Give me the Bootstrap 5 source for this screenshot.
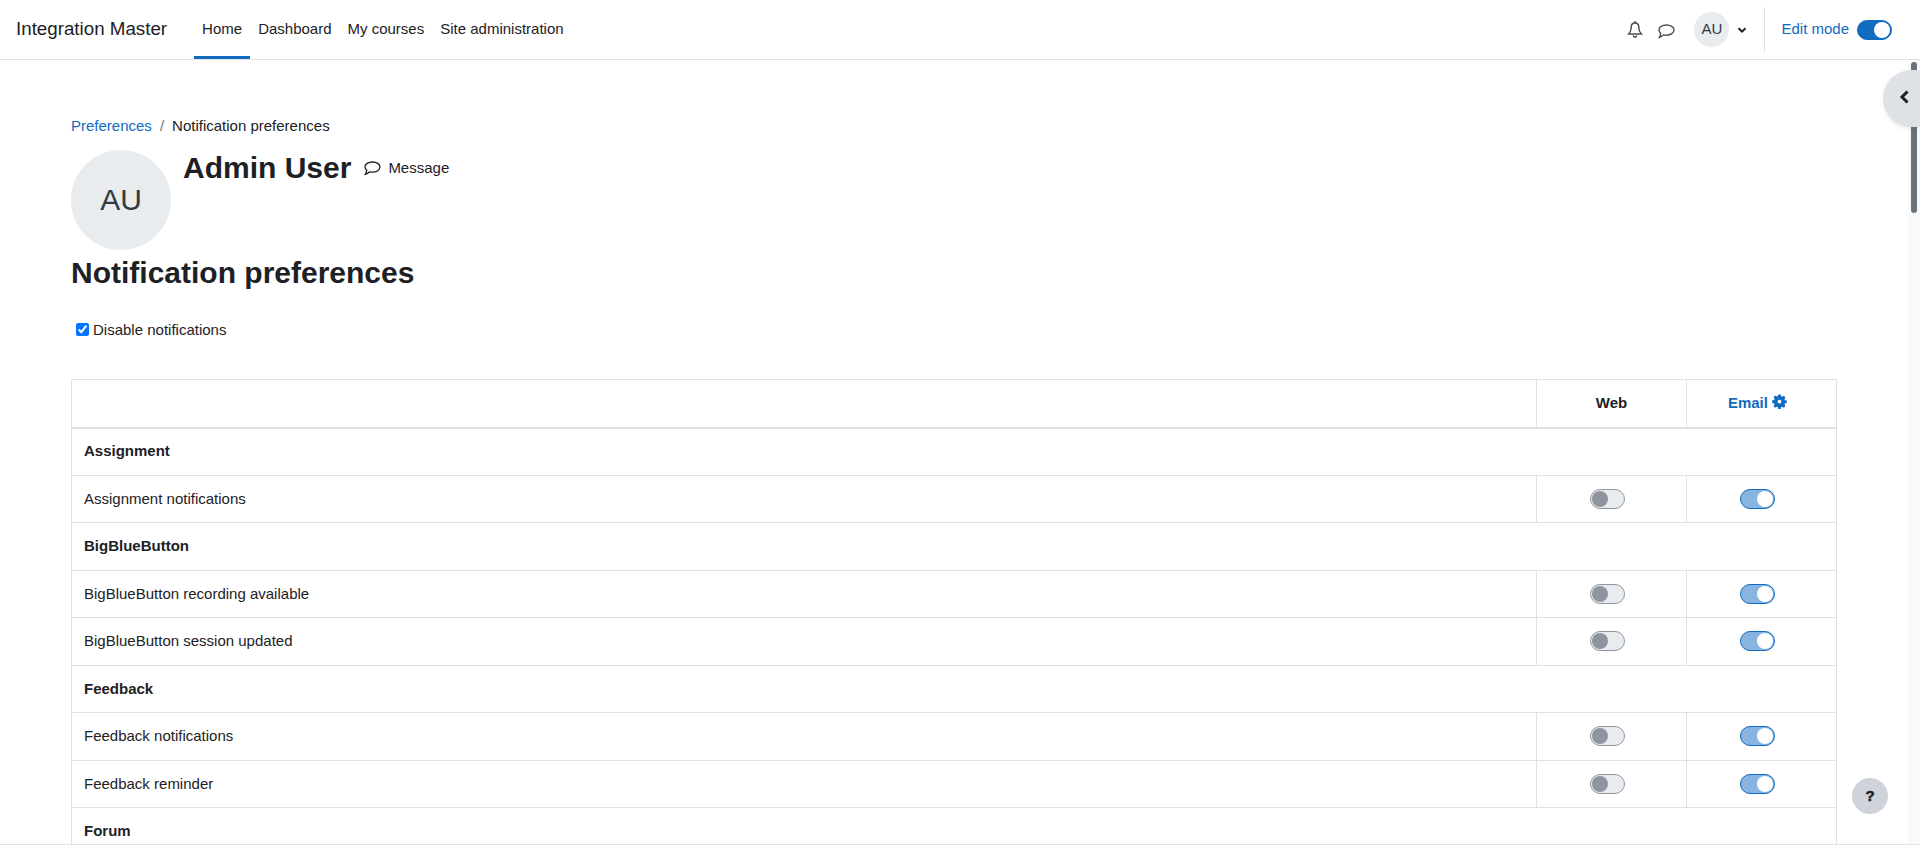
<!DOCTYPE html>
<html lang="en">

<head>
  <title>Notification preferences</title>
  <link href="https://cdn.jsdelivr.net/npm/bootstrap@5.3.3/dist/css/bootstrap.min.css" rel="stylesheet">
  <style>
    html, body { height: 845px; overflow: hidden; }
    body { font-family: "Liberation Sans", Arial, sans-serif; font-size: 15px; line-height: 22.5px; color: #1d2125; background: #fff; }
    a { text-decoration: none; color: #0f6cbf; }

    .top-bar { height: 60px; border-bottom: 1px solid #dee2e6; padding: 0 28px 0 16px; }
    .site-name { font-size: 18.75px; color: #1d2125; margin-right: 27px; }
    .main-links { height: 59px; }
    .main-links a { color: #1d2125; height: 59px; padding: 3px 8px 0; display: flex; align-items: center; border-bottom: 3px solid transparent; }
    .main-links a.current { border-bottom-color: #0f6cbf; padding: 3px 7px 0; }
    .main-links a.home-link { width: 56px; justify-content: center; }
    .bell-icon { width: 16px; height: 17px; color: #495057; margin-left: 1px; }
    .chat-icon { width: 17px; height: 15px; color: #495057; margin-left: 15px; margin-top: 3px; }
    .small-avatar { width: 35px; height: 35px; border-radius: 50%; background: #e9ecef; color: #343a40; font-size: 15px; margin-left: 19px; }
    .caret-icon { margin-left: 8px; }
    .divider-line { width: 1px; height: 45px; background: #dee2e6; margin: 0 16px 0 17px; }
    .edit-switch { width: 35px; height: 20px; border-radius: 10px; background: #0f6cbf; border: 1px solid #0f6cbf; padding: 1px; }
    .switch-knob { width: 16px; height: 16px; border-radius: 50%; background: #fff; }

    .page-body { padding: 55px 84px 0 71px; }
    .crumb-row { margin: 0 0 12.5px; }
    .crumb-row .crumb-sep { color: #6a737b; padding: 0 8px; }
    .big-avatar { width: 100px; height: 100px; border-radius: 50%; background: #e9ecef; color: #343a40; font-size: 30px; flex-shrink: 0; }
    .user-name { font-size: 30px; line-height: 36px; font-weight: 700; margin: 0; }
    .msg-link { color: #1d2125; font-size: 15px; margin: 7px 0 0 13px; }
    .msg-icon { margin-right: 7px; }
    .page-title { font-size: 30px; line-height: 36px; font-weight: 700; margin: 5px 0 0; }
    .disable-row { margin: 28px 0 0 5px; height: 23px; }
    .disable-row input { width: 13px; height: 13px; margin: 0 4px 3px 0; }

    .prefs-table { width: 1766px; margin-top: 37px; border: 1px solid #dee2e6; border-collapse: collapse; table-layout: fixed; }
    .prefs-table td, .prefs-table th { border: 1px solid #dee2e6; padding: 0 12px; height: 47.5px; font-size: 15px; vertical-align: middle; }
    .prefs-table thead th { border-bottom: 2px solid #dee2e6; height: 48px; text-align: center; font-weight: 700; }
    .col-web, .col-email { width: 150px; }
    .prefs-table .group-row { font-weight: 700; }
    .gear-icon { vertical-align: -1px; margin-right: 8px; }
    .pref-switch { display: block; width: 35px; height: 20px; border-radius: 10px; border: 1px solid #8f959e; background: #e9ecef; padding: 1px; margin: 0 0 0 41px; }
    .pref-switch i { display: block; width: 16px; height: 16px; border-radius: 50%; background: #8f959e; }
    .pref-switch.is-on { border-color: #0f6cbf; background: #87b5df; }
    .pref-switch.is-on i { background: #fff; margin-left: 15px; }

    .drawer-toggle { position: absolute; right: 0; top: 70px; width: 37px; height: 57px; border-radius: 28.5px 0 0 28.5px; background: #dee2e6; box-shadow: 0 2px 4px rgba(0, 0, 0, .08); padding: 20px 0 0 15px; }
    .drawer-toggle svg { display: block; }
    .scroll-track { position: absolute; right: 0; top: 60px; bottom: 0; width: 12px; background: #f8f9fa; }
    .scroll-thumb { position: absolute; left: 3px; top: 2px; width: 6px; height: 151px; border-radius: 3px; background: #6a737b; }
    .help-btn { position: absolute; left: 1852px; top: 778px; width: 36px; height: 36px; border-radius: 50%; background: #ced4da; font-weight: 700; font-size: 15px; color: #1d2125; -webkit-text-stroke: .5px #1d2125; }
    .bottom-line { position: absolute; left: 0; right: 0; bottom: 0; height: 1px; background: #dee2e6; }
  </style>
</head>

<body class="position-relative">
  <!-- Top navigation -->
  <nav class="top-bar d-flex align-items-center">
    <a class="site-name" href="#">Integration Master</a>
    <div class="main-links d-flex">
      <a class="current home-link" href="#">Home</a>
      <a href="#">Dashboard</a>
      <a href="#">My courses</a>
      <a href="#">Site administration</a>
    </div>
    <div class="d-flex align-items-center ms-auto">
      <svg class="bell-icon" viewBox="0 0 16 17" fill="none" stroke="currentColor" stroke-width="1.5"><path d="M8 2c-2.500 0-3.800 1.900-3.800 4.300 0 3-.8 5-2.500 6.700h12.600c-1.700-1.700-2.500-3.700-2.500-6.700C11.800 3.900 10.500 2 8 2z"/><path d="M8 .5V2M6.500 15c.3.800.9 1.200 1.500 1.200s1.200-.4 1.500-1.200" stroke-linecap="round"/></svg>
      <svg class="chat-icon" viewBox="0 0 17 15" fill="none" stroke="currentColor" stroke-width="1.4"><path d="M8.500 1C4.300 1 1 3.100 1 5.900c0 1.200.6 2.300 1.700 3.200-.1 1.300-.6 2.900-1.300 4.200 1.700-.5 3.200-1.700 4.200-2.400.9.200 1.900.3 2.900.3 4.200 0 7.500-2.300 7.500-5.200S12.700 1 8.500 1z"/></svg>
      <div class="small-avatar d-flex align-items-center justify-content-center">AU</div>
      <svg class="caret-icon" width="10" height="10" viewBox="0 0 10 10" fill="none" stroke="#1d2125" stroke-width="2"><path d="M1.500 3.200 5 6.700l3.500-3.500"/></svg>
      <div class="divider-line"></div>
      <a href="#" class="me-2">Edit mode</a>
      <div class="edit-switch d-flex justify-content-end"><div class="switch-knob"></div></div>
    </div>
  </nav>

  <div class="page-body">
    <div class="crumb-row"><a href="#">Preferences</a><span class="crumb-sep">/</span><span>Notification preferences</span></div>
    <div class="d-flex">
      <div class="big-avatar d-flex align-items-center justify-content-center">AU</div>
      <div class="d-flex align-items-start ms-2 ps-1">
        <h2 class="user-name">Admin User</h2>
        <a class="msg-link d-flex align-items-center" href="#">
          <svg class="msg-icon" width="17" height="15" viewBox="0 0 17 15" fill="none" stroke="#1d2125" stroke-width="1.300"><path d="M8.500 1C4.300 1 1 3.100 1 5.900c0 1.200.6 2.300 1.700 3.200-.1 1.300-.6 2.900-1.300 4.200 1.700-.5 3.200-1.700 4.200-2.400.9.200 1.900.3 2.900.3 4.200 0 7.500-2.300 7.500-5.200S12.700 1 8.500 1z"/></svg>
          Message
        </a>
      </div>
    </div>
    <h2 class="page-title">Notification preferences</h2>
    <div class="disable-row d-flex align-items-center">
      <input type="checkbox" id="disableAll" checked>
      <label for="disableAll">Disable notifications</label>
    </div>

    <table class="prefs-table">
      <colgroup><col><col class="col-web"><col class="col-email"></colgroup>
      <thead>
        <tr>
          <th></th>
          <th>Web</th>
          <th><a href="#">Email <svg class="gear-icon" width="15" height="15" viewBox="0 0 16 16" fill="#0f6cbf"><path fill-rule="evenodd" d="M6.700.5h2.600l.4 2 1.200.5 1.700-1.100 1.800 1.800-1.100 1.700.5 1.200 2 .4v2.600l-2 .4-.5 1.200 1.100 1.700-1.800 1.800-1.700-1.100-1.200.5-.4 2H6.700l-.4-2-1.200-.5-1.700 1.100-1.800-1.800 1.100-1.700-.5-1.200-2-.4V6.700l2-.4.5-1.200-1.100-1.700 1.800-1.800 1.700 1.100 1.200-.5zM8 6a2 2 0 1 0 0 4 2 2 0 0 0 0-4z"/></svg></a></th>
        </tr>
      </thead>
      <tbody id="prefRows"></tbody>
    </table>
  </div>

  <div class="scroll-track"><div class="scroll-thumb"></div></div>
  <div class="drawer-toggle">
    <svg width="12" height="14" viewBox="0 0 12 14" fill="none" stroke="#1d2125" stroke-width="3"><path d="M9.500 1.500 4 7l5.500 5.500"/></svg>
  </div>
  <div class="help-btn d-flex align-items-center justify-content-center">?</div>
  <div class="bottom-line"></div>

  <script>
    // groups with their notification rows
    const groups = [
      ["Assignment", ["Assignment notifications"]],
      ["BigBlueButton", ["BigBlueButton recording available", "BigBlueButton session updated"]],
      ["Feedback", ["Feedback notifications", "Feedback reminder"]],
      ["Forum", []]
    ];
    const body = document.getElementById("prefRows");
    const sw = on => `<span class="pref-switch${on ? " is-on" : ""}"><i></i></span>`;
    groups.forEach(([name, rows]) => {
      body.insertAdjacentHTML("beforeend", `<tr><td colspan="3" class="group-row">${name}</td></tr>`);
      rows.forEach(r => {
        body.insertAdjacentHTML("beforeend", `<tr><td>${r}</td><td>${sw(false)}</td><td>${sw(true)}</td></tr>`);
      });
    });
  </script>
  <script src="https://cdn.jsdelivr.net/npm/bootstrap@5.3.3/dist/js/bootstrap.bundle.min.js"></script>
</body>

</html>
